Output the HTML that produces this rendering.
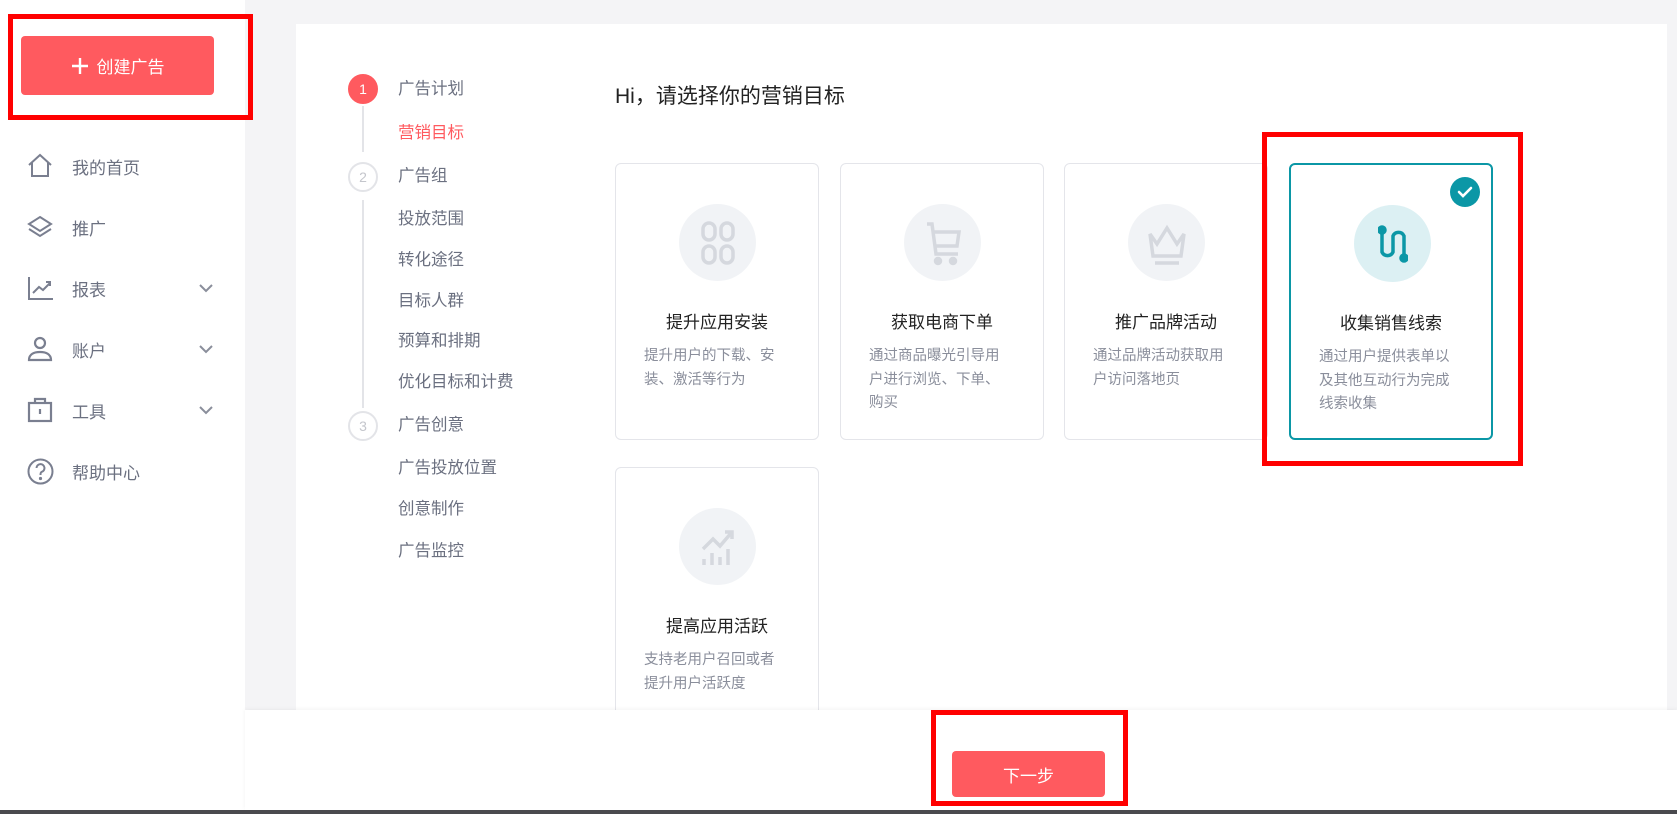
<!DOCTYPE html>
<html><head><meta charset="utf-8"><style>
*{margin:0;padding:0;box-sizing:border-box}
body{width:1677px;height:814px;overflow:hidden;background:#f4f4f6;font-family:"Liberation Sans","Noto Sans CJK SC",sans-serif;position:relative}
.side{position:absolute;left:0;top:0;width:245px;height:814px;background:#fff}
.abs{position:absolute}
.btn{position:absolute;left:21px;top:36px;width:193px;height:59px;background:#ff5a5f;border-radius:4px;color:#fff;font-size:17px;display:flex;align-items:center;justify-content:center;gap:8px}
.menu{position:absolute;left:0;width:245px;height:30px;display:flex;align-items:center}
.menu svg{position:absolute;left:27px}
.menu span{position:absolute;left:72px;font-size:17px;color:#6b7080}
.menu .chev{position:absolute;left:198px}
.panel{position:absolute;left:296px;top:24px;width:1371px;height:700px;background:#fff}
.step{position:absolute;left:398px;font-size:16.5px;color:#6b7080;line-height:20px}
.circ{position:absolute;left:348px;width:30px;height:30px;border-radius:50%;border:2px solid #e3e4e8;color:#c4c6cc;font-size:14px;display:flex;align-items:center;justify-content:center;background:#fff}
.card{position:absolute;width:204px;height:277px;border:1.5px solid #e4e5ea;border-radius:6px;background:#fff}
.card .ic{position:absolute;left:63px;top:40px;width:77px;height:77px;border-radius:50%;background:#f1f3f6;display:flex;align-items:center;justify-content:center}
.card h3{position:absolute;top:144px;left:0;width:100%;text-align:center;font-size:17px;font-weight:normal;color:#222}
.card p{position:absolute;top:181px;left:28px;width:136px;font-size:14.5px;line-height:23.5px;color:#8a8e9b}
.red{position:absolute;border:5px solid #ff0000}
</style></head><body>
<div class="side"></div>
<div class="red" style="left:8px;top:14px;width:245px;height:106px"></div>
<div class="btn"><svg width="18" height="18"><path d="M9 1v16M1 9h16" stroke="#fff" stroke-width="2.4"/></svg>创建广告</div>

<div class="menu" style="top:151px"><svg width="26" height="26" viewBox="0 0 26 26" fill="none" stroke="#7a7f90" stroke-width="2"><path d="M2 12L13 2l11 10M5 9v14h16V9"/></svg><span>我的首页</span></div>
<div class="menu" style="top:212px"><svg width="26" height="26" viewBox="0 0 26 26" fill="none" stroke="#7a7f90" stroke-width="2"><path d="M13 3l11 7-11 7-11-7zM2 15l11 7 11-7"/></svg><span>推广</span></div>
<div class="menu" style="top:273px"><svg width="26" height="26" viewBox="0 0 26 26" fill="none" stroke="#7a7f90" stroke-width="2"><path d="M2 2v22h24M6 18l6-6 4 3 7-7M19 7h4v4"/></svg><span>报表</span><svg class="chev" width="16" height="10"><path d="M2 2l6 6 6-6" stroke="#8a8e9b" stroke-width="2" fill="none"/></svg></div>
<div class="menu" style="top:334px"><svg width="26" height="26" viewBox="0 0 26 26" fill="none" stroke="#7a7f90" stroke-width="2.2"><circle cx="13" cy="7" r="5"/><path d="M2 24c0-6 5-8 11-8s11 2 11 8z"/></svg><span>账户</span><svg class="chev" width="16" height="10"><path d="M2 2l6 6 6-6" stroke="#8a8e9b" stroke-width="2" fill="none"/></svg></div>
<div class="menu" style="top:395px"><svg width="26" height="26" viewBox="0 0 26 26" fill="none" stroke="#7a7f90" stroke-width="2.2"><rect x="2" y="6" width="22" height="18"/><path d="M8 6V2h10v4M13 12v5"/></svg><span>工具</span><svg class="chev" width="16" height="10"><path d="M2 2l6 6 6-6" stroke="#8a8e9b" stroke-width="2" fill="none"/></svg></div>
<div class="menu" style="top:456px"><svg width="27" height="27" viewBox="0 0 27 27" fill="none" stroke="#7a7f90" stroke-width="2"><circle cx="13.5" cy="13.5" r="12"/><path d="M9.5 10a4 4 0 1 1 5 4c-1 .5-1 1.5-1 3"/><circle cx="13.5" cy="20.5" r=".6" fill="#7a7f90"/></svg><span>帮助中心</span></div>

<div class="panel"></div>
<div class="abs" style="left:362px;top:106px;width:2px;height:46px;background:#e3e4e8"></div>
<div class="abs" style="left:362px;top:200px;width:2px;height:208px;background:#e3e4e8"></div>
<div class="circ" style="top:74px;background:#ff5a5f;border-color:#ff5a5f;color:#fff">1</div>
<div class="circ" style="top:162px">2</div>
<div class="circ" style="top:411px">3</div>
<div class="step" style="top:79px">广告计划</div>
<div class="step" style="top:123px;color:#ff5a5f">营销目标</div>
<div class="step" style="top:166px">广告组</div>
<div class="step" style="top:209px">投放范围</div>
<div class="step" style="top:250px">转化途径</div>
<div class="step" style="top:291px">目标人群</div>
<div class="step" style="top:331px">预算和排期</div>
<div class="step" style="top:372px">优化目标和计费</div>
<div class="step" style="top:415px">广告创意</div>
<div class="step" style="top:458px">广告投放位置</div>
<div class="step" style="top:499px">创意制作</div>
<div class="step" style="top:541px">广告监控</div>

<div class="abs" style="left:615px;top:80px;font-size:21px;color:#222">Hi，请选择你的营销目标</div>

<div class="card" style="left:615px;top:163px"><div class="ic"><svg width="36" height="46" viewBox="0 0 36 46" fill="none" stroke="#d5d8de" stroke-width="3.5"><rect x="3" y="3" width="12" height="17" rx="6"/><rect x="21" y="3" width="12" height="17" rx="6"/><rect x="3" y="26" width="12" height="17" rx="6"/><rect x="21" y="26" width="12" height="17" rx="6"/></svg></div><h3>提升应用安装</h3><p>提升用户的下载、安装、激活等行为</p></div>
<div class="card" style="left:840px;top:163px"><div class="ic"><svg width="36" height="46" viewBox="0 0 36 46" fill="none" stroke="#d5d8de" stroke-width="3.5"><path d="M2 4h5l4 30h22M9 12h25l-2 14H11"/><circle cx="13" cy="41" r="2.5" fill="#d5d8de"/><circle cx="28" cy="41" r="2.5" fill="#d5d8de"/></svg></div><h3>获取电商下单</h3><p>通过商品曝光引导用户进行浏览、下单、购买</p></div>
<div class="card" style="left:1064px;top:163px"><div class="ic"><svg width="44" height="46" viewBox="0 0 44 46" fill="none" stroke="#d5d8de" stroke-width="3.5"><path d="M5 14l7 10 10-16 10 16 7-10-3 22H8zM10 43h24"/></svg></div><h3>推广品牌活动</h3><p>通过品牌活动获取用户访问落地页</p></div>
<div class="card" style="left:1289px;top:163px;border:2px solid #0b97a6"><div class="ic" style="background:#dcf0f3"><svg width="30" height="40" viewBox="0 0 30 40" fill="none" stroke="#0b97a6" stroke-width="3.5" stroke-linecap="round"><path d="M4 6v22a6 6 0 0 0 11 0V12a6 6 0 0 1 11 0v22"/><circle cx="4" cy="6" r="3" fill="#0b97a6"/><circle cx="26" cy="34" r="3" fill="#0b97a6"/></svg></div><div class="abs" style="left:159px;top:12px;width:30px;height:30px;border-radius:50%;background:#0b97a6"><svg width="30" height="30"><path d="M9 15l4 4 8-8" stroke="#fff" stroke-width="2.6" fill="none" stroke-linecap="round"/></svg></div><h3>收集销售线索</h3><p>通过用户提供表单以及其他互动行为完成线索收集</p></div>
<div class="card" style="left:615px;top:467px;height:300px"><div class="ic"><svg width="40" height="40" viewBox="0 0 40 40" fill="none" stroke="#d5d8de" stroke-width="3.5"><path d="M5 22l10-10 7 7 12-14M27 5h7v7M6 32v6M14 26v12M22 30v8M30 22v16"/></svg></div><h3>提高应用活跃</h3><p>支持老用户召回或者提升用户活跃度</p></div>
<div class="red" style="left:1262px;top:132px;width:261px;height:334px"></div>

<div class="abs" style="left:245px;top:710px;width:1432px;height:100px;background:#fff;box-shadow:0 -1px 4px rgba(0,0,0,.05)"></div>
<div class="abs" style="left:952px;top:751px;width:153px;height:46px;background:#ff5a5f;border-radius:4px;color:#fff;font-size:17px;display:flex;align-items:center;justify-content:center">下一步</div>
<div class="red" style="left:931px;top:710px;width:197px;height:96px"></div>
<div class="abs" style="left:0;top:810px;width:1677px;height:4px;background:#4a4a4e"></div>
</body></html>
